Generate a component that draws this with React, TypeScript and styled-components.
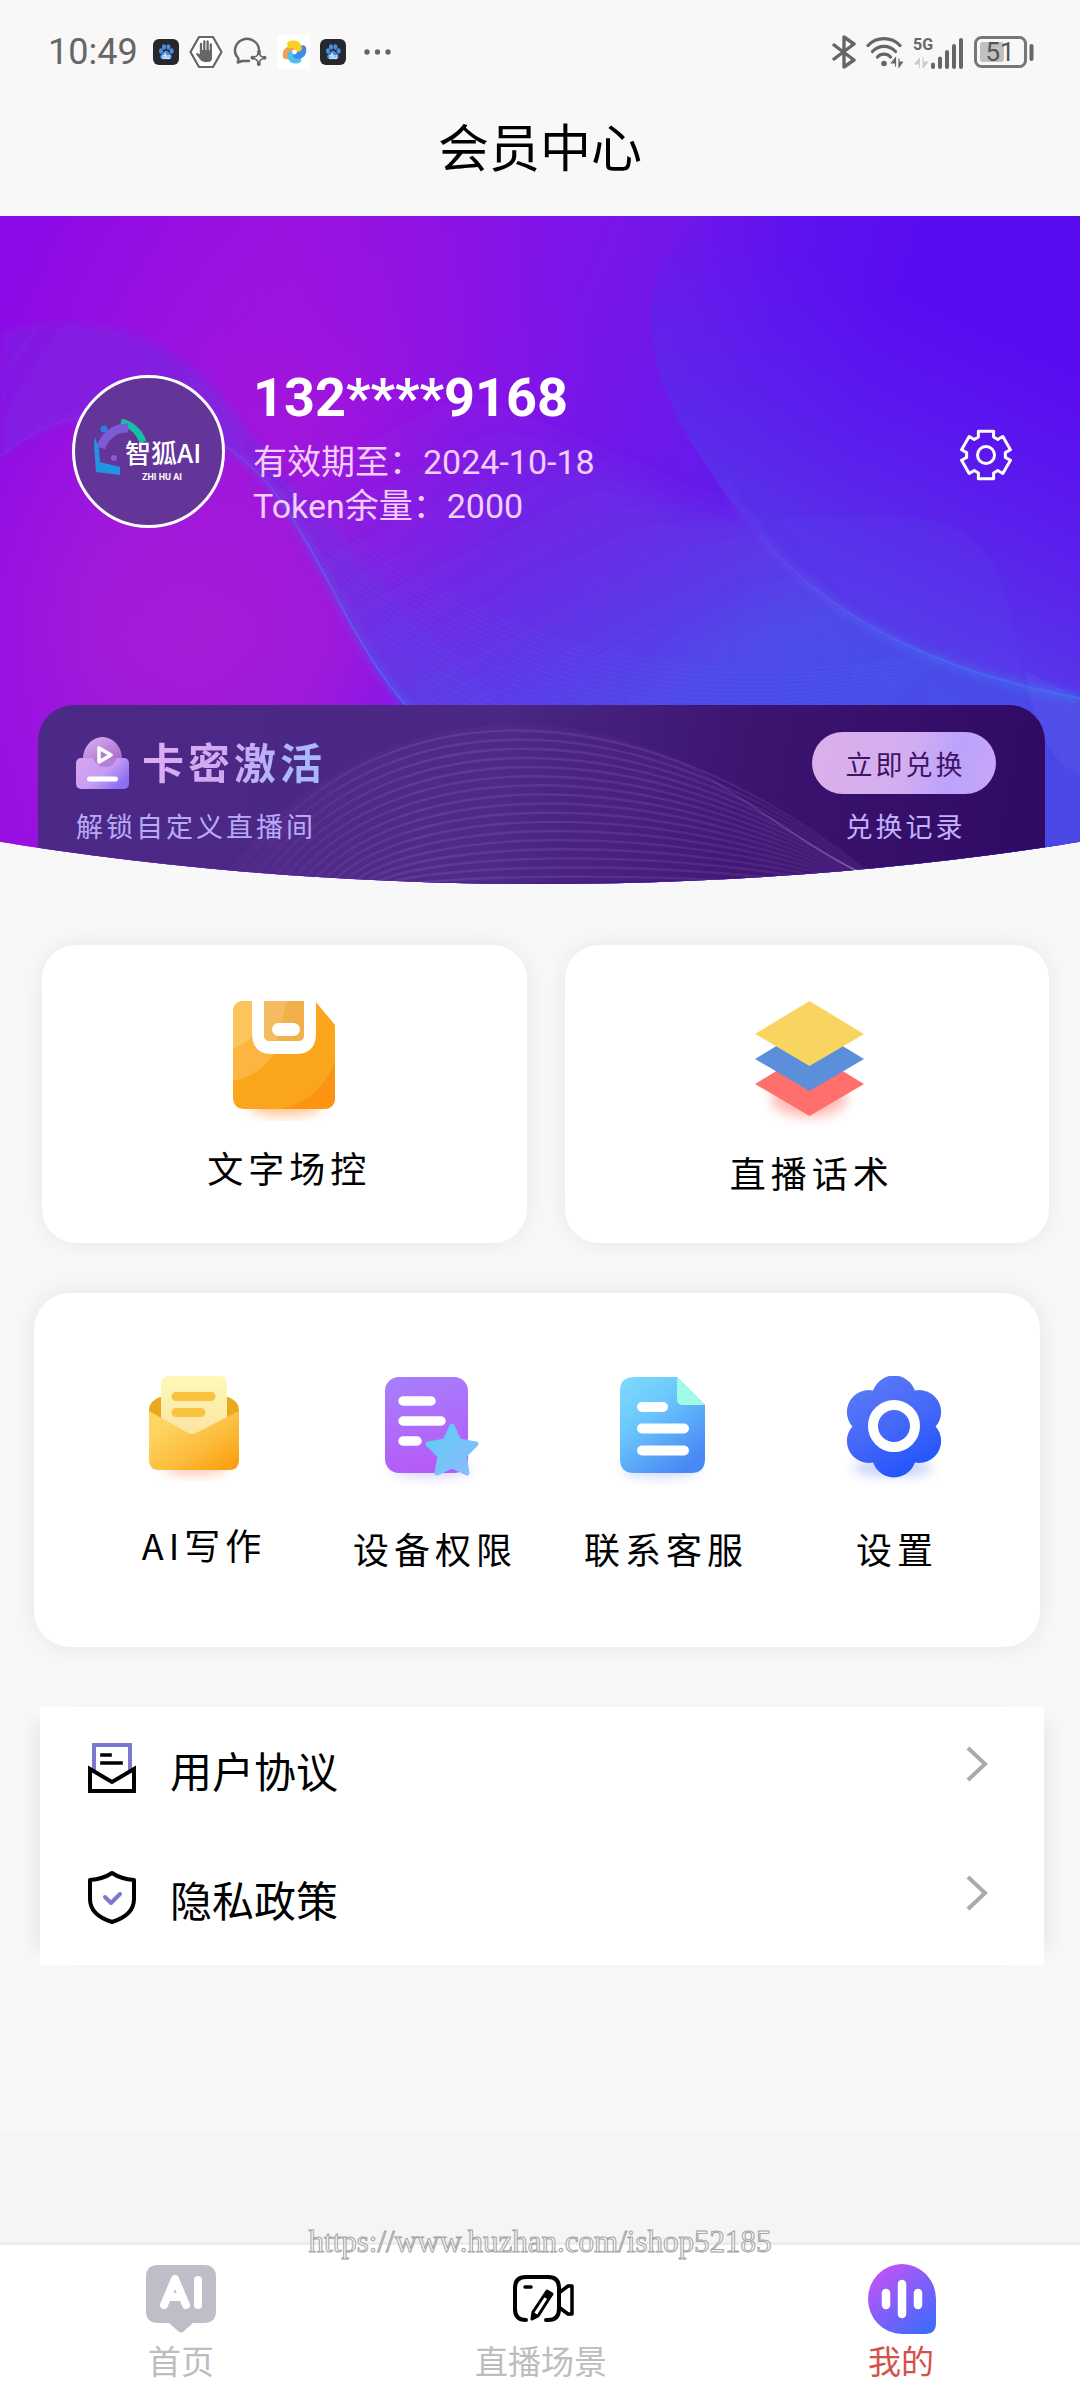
import React from "react";
import styled, { createGlobalStyle } from "styled-components";

const cjk = `"Noto Sans CJK SC", "Noto Sans", sans-serif`;
const latin = `Roboto, "Noto Sans CJK SC", sans-serif`;

const GlobalStyle = createGlobalStyle`
  *, *::before, *::after { box-sizing: border-box; }
  body { margin: 0; background: #f8f8f8; font-family: ${cjk}; color: #000; }
  h1, h2, p { margin: 0; font-weight: 400; }
  a { color: inherit; text-decoration: none; }
  button { border: 0; padding: 0; background: none; font: inherit; color: inherit; cursor: pointer; }
  svg { display: block; flex: none; }
`;

const Page = styled.div`
  display: flex;
  flex-direction: column;
  min-height: 100vh;
`;

/* ---------- status bar and title ---------- */

const StatusBar = styled.div`
  display: flex;
  align-items: center;
  justify-content: space-between;
  height: 104px;
  padding: 0 46px 0 48px;
  color: #666;
`;

const StatusGroup = styled.div`
  display: flex;
  align-items: center;
  gap: 10px;
`;

const Clock = styled.time`
  margin-right: 5px;
  font: 400 36px/40px ${latin};
`;

const Title = styled.h1`
  padding-bottom: 30px;
  font-size: 51px;
  line-height: 82px;
  text-align: center;
`;

/* ---------- hero ---------- */

const Hero = styled.section`
  position: relative;
  padding: 159px 35px 0 38px;
  clip-path: ellipse(143% 100% at 50% 0);
  background: #7a1ce6;
`;

const HeroArt = styled.svg`
  position: absolute;
  inset: 0;
  width: 100%;
  height: 100%;
`;

const Profile = styled.div`
  position: relative;
  display: flex;
  align-items: center;
  padding: 0 33px 0 34px;
`;

const Avatar = styled.div`
  width: 153px;
  height: 153px;
  border: 3px solid #fff;
  border-radius: 50%;
  background: #633598;
  overflow: hidden;
`;

const ProfileText = styled.div`
  flex: 1;
  padding-left: 28px;
  color: #f3cdfb;
  font: 400 34px/44px ${latin};
`;

const Phone = styled.h2`
  margin-bottom: 20px;
  color: #fff;
  font: 700 54px/45px ${latin};
`;

const SettingsButton = styled.button`
  padding-top: 6px;
`;

const VipCard = styled.div`
  position: relative;
  display: flex;
  justify-content: space-between;
  height: 179px;
  margin-top: 177px;
  padding: 27px 49px 0 38px;
  border-radius: 36px 36px 0 0;
  background: linear-gradient(100deg, #4c2986 0%, #4a2784 45%, #3b1470 70%, #2f0a63 100%);
  overflow: hidden;
`;

const VipColumn = styled.div<{ $align: string }>`
  position: relative;
  display: flex;
  flex-direction: column;
  align-items: ${(p) => p.$align};
  gap: 12px;
`;

const VipTitle = styled.div`
  display: flex;
  align-items: center;
  gap: 13px;
  height: 62px;
`;

const VipName = styled.h2`
  padding-bottom: 4px;
  font-size: 42px;
  font-weight: 700;
  line-height: 58px;
  letter-spacing: 4px;
  background: linear-gradient(110deg, #e0aef0 0%, #cfa8f2 45%, #a9b8fb 80%);
  background-clip: text;
  -webkit-background-clip: text;
  color: transparent;
`;

const VipNote = styled.p`
  color: #b9aaf8;
  font-size: 27px;
  line-height: 40px;
  letter-spacing: 3px;
`;

const RedeemButton = styled.button`
  width: 184px;
  height: 62px;
  padding-left: 3px;
  border-radius: 31px;
  background: linear-gradient(105deg, #dcb0ea 0%, #d3aef0 50%, #bda2fc 75%, #c6a8f8 100%);
  color: #3d1466;
  font-size: 27px;
  letter-spacing: 3px;
`;

const RecordLink = styled.a`
  padding-left: 3px;
  color: #c0b2fb;
  font-size: 27px;
  line-height: 40px;
  letter-spacing: 3px;
`;

/* ---------- feature cards ---------- */

const FeatureRow = styled.div`
  display: grid;
  grid-template-columns: 1fr 1fr;
  gap: 38px;
  padding: 61px 31px 0 42px;
`;

const Tile = styled.button<{ $gap: number }>`
  display: flex;
  flex-direction: column;
  align-items: center;
  justify-content: flex-start;
  gap: ${(p) => p.$gap}px;
`;

const TileLabel = styled.span`
  padding-left: 5px;
  font-size: 36px;
  line-height: 46px;
  letter-spacing: 5px;
`;

const FeatureCard = styled(Tile)`
  padding: 56px 0 48px 5px;
  border-radius: 34px;
  background: #fff;
  box-shadow: 0 0 24px rgba(0, 0, 0, 0.07);
`;

const ToolCard = styled.div`
  display: grid;
  grid-template-columns: repeat(4, 1fr);
  align-items: start;
  margin: 50px 40px 0 34px;
  padding: 83px 30px 76px 52px;
  border-radius: 36px;
  background: #fff;
  box-shadow: 0 0 28px rgba(0, 0, 0, 0.08);
`;

const List = styled.nav`
  margin: 60px 36px 0 40px;
  background: #fff;
  box-shadow: 18px 0 20px -14px rgba(0, 0, 0, 0.08), -18px 0 20px -14px rgba(0, 0, 0, 0.08);
`;

const ListRow = styled.a`
  display: flex;
  align-items: center;
  gap: 32px;
  height: 129px;
  padding: 0 56px 8px 46px;

  svg:last-child { margin-bottom: 8px; }
`;

const ListLabel = styled.span`
  flex: 1;
  padding-top: 4px;
  font-size: 42px;
  line-height: 60px;
`;

/* ---------- bottom tabs ---------- */

const Footer = styled.footer`
  position: relative;
  margin-top: auto;
  padding-top: 111px;
  background: #f5f5f5;
`;

const Tabs = styled.nav`
  display: grid;
  grid-template-columns: repeat(3, 1fr);
  height: 158px;
  border-top: 3px solid #ededed;
  background: #fff;
`;

const Tab = styled.a<{ $color: string }>`
  display: flex;
  flex-direction: column;
  align-items: center;
  padding: 18px 0 0 2px;
  gap: 3px;
  color: ${(p) => p.$color};
  font-size: 33px;
  line-height: 44px;
`;

const Watermark = styled.div`
  position: absolute;
  top: 93px;
  left: 0;
  right: 0;
  text-align: center;
  font: 400 31px/36px "Liberation Serif", serif;
  color: #f8f8f8;
  -webkit-text-stroke: 1px #a4a4a4;
  pointer-events: none;
`;

/* ---------- status icons ---------- */

const PawIcon = () => (
  <svg width="26" height="26" viewBox="0 0 26 26">
    <rect width="26" height="26" rx="6" fill="#26282d" />
    <g fill="#4a8ee0">
      <ellipse cx="8" cy="12" rx="2" ry="2.800" />
      <ellipse cx="11" cy="8" rx="2" ry="2.800" />
      <ellipse cx="15.400" cy="8" rx="2" ry="2.800" />
      <ellipse cx="18.600" cy="12" rx="2" ry="2.800" />
      <path d="M13 11.500c2 0 3 2.600 4.600 3.800 2 1.500 1.400 5-1.400 5H9.800c-2.800 0-3.400-3.500-1.400-5C10 14.100 11 11.500 13 11.500Z" />
    </g>
    <text x="13" y="19.500" fontSize="7" fontWeight="700" fontFamily="Roboto, sans-serif" textAnchor="middle" fill="#fff">du</text>
  </svg>
);

const HandIcon = () => (
  <svg width="34" height="34" viewBox="0 0 34 34">
    <path d="M10 2h14l8.500 15L24 32H10L1.500 17Z" fill="#fff" stroke="#666" strokeWidth="2.200" strokeLinejoin="round" />
    <path d="M12 20V9M15.300 17V6.500M18.600 17V6.500M21.800 18V9.500" stroke="#666" strokeWidth="2.300" strokeLinecap="round" />
    <path d="M10.900 15h12.100v8q0 4-4 4h-3.600q-3 0-4.600-3l-3.600-4.400q-.8-1.800 1.200-1.600l2.500 1.400Z" fill="#666" />
  </svg>
);

const BubbleIcon = () => (
  <svg width="34" height="30" viewBox="0 0 34 30" fill="none" stroke="#666" strokeWidth="2.400" strokeLinejoin="round">
    <path d="M26 13A12 11.500 0 1 0 5.500 21.500L4.800 25.500 9 24H16" strokeLinecap="round" />
    <path d="M26 15.500l1.600 3.400 3.600 2-3.600 2-2 3.600-1.800-3.600-4.200-2 4.200-2Z" strokeWidth="1.600" />
    <g fill="#666" stroke="none">
      <circle cx="26" cy="15" r="2" /><circle cx="31.500" cy="20.800" r="2" /><circle cx="25.800" cy="27" r="2" /><circle cx="19.500" cy="20.800" r="2" />
    </g>
  </svg>
);

const PinwheelIcon = () => (
  <svg width="33" height="34" viewBox="0 0 33 34">
    <rect width="33" height="34" fill="#fff" />
    <g strokeWidth="7.500" strokeLinecap="round" fill="none">
      <path d="M9.500 20.500Q9 15 15 14.500" stroke="#f6a04d" />
      <path d="M20.500 24.500Q14.500 26 14 20" stroke="#4fbef3" />
      <path d="M25.500 14Q26 20.500 20 20" stroke="#3f8ae6" />
      <path d="M14 9.500Q20 8 21 13" stroke="#fbcf1f" />
    </g>
    <circle cx="17.500" cy="17" r="2.400" fill="#fff" />
  </svg>
);

const DotsIcon = () => (
  <svg width="35" height="6" viewBox="-8 0 35 6" fill="#666">
    <circle cx="3" cy="3" r="2.700" /><circle cx="13.500" cy="3" r="2.700" /><circle cx="24" cy="3" r="2.700" />
  </svg>
);

const BluetoothIcon = () => (
  <svg width="24" height="34" viewBox="0 0 24 34" fill="none" stroke="#666" strokeWidth="3.400" strokeLinejoin="round" strokeLinecap="round">
    <path d="M2 10l20 15-10 7V2l10 7L2 24" />
  </svg>
);

const WifiIcon = () => (
  <svg width="37" height="32" viewBox="0 0 37 32" fill="none" stroke="#666" strokeWidth="3.200" strokeLinecap="round">
    <path d="M2 9.500a22 22 0 0 1 32 0M6.500 15.500a15.500 15.500 0 0 1 23 0M11.500 21a9 9 0 0 1 13 0" />
    <circle cx="18" cy="27.500" r="2.800" fill="#666" stroke="none" />
    <path d="M29.500 30v-8l-4 5h4M33 23v8l3.500-5H33" fill="#666" strokeWidth="1.200" />
  </svg>
);

const SignalIcon = () => (
  <svg width="51" height="34" viewBox="0 -2 51 34">
    <text x="0" y="13" fontSize="16" fontWeight="700" fontFamily="Roboto, sans-serif" fill="#666">5G</text>
    <path d="M6.500 31V21l-5 6h5M10 20v11l5-6h-5" fill="#ccc" stroke="#ccc" />
    <g stroke="#666" strokeWidth="4" strokeLinecap="round">
      <path d="M20 27.500v2.500M27 21.500V30M34 15v15M41 9v21M48 3v27" />
    </g>
  </svg>
);

const BatteryIcon = () => (
  <svg width="60" height="32" viewBox="0 0 60 32">
    <rect x="1.500" y="1.500" width="50" height="29" rx="6" fill="none" stroke="#777" strokeWidth="3" />
    <rect x="6" y="6" width="24" height="20" rx="3" fill="#c0c0c0" />
    <rect x="55.500" y="8" width="4" height="17" rx="2" fill="#666" />
    <text x="26" y="25" fontSize="26" fontFamily="Roboto, sans-serif" textAnchor="middle" fill="#555">51</text>
  </svg>
);

/* ---------- hero drawings ---------- */

const heroLines = Array.from({ length: 30 }, (_, i) => i);

const HeroBackground = () => (
  <HeroArt viewBox="0 0 1080 668" preserveAspectRatio="none" aria-hidden="true">
    <defs>
      <linearGradient id="base" x1="0" y1="0" x2="1" y2="0.250">
        <stop offset="0" stopColor="#8a09e8" />
        <stop offset="0.250" stopColor="#9911df" />
        <stop offset="0.500" stopColor="#7d14e9" />
        <stop offset="0.750" stopColor="#621bec" />
        <stop offset="1" stopColor="#5a14ee" />
      </linearGradient>
      <radialGradient id="magenta" gradientUnits="userSpaceOnUse" cx="210" cy="400" r="300">
        <stop offset="0" stopColor="#a81cd6" />
        <stop offset="0.400" stopColor="#a41cd8" stopOpacity="0.800" />
        <stop offset="1" stopColor="#9a14e0" stopOpacity="0" />
      </radialGradient>
      <radialGradient id="magentaTop" gradientUnits="userSpaceOnUse" cx="300" cy="190" r="300">
        <stop offset="0" stopColor="#a616da" stopOpacity="0.700" />
        <stop offset="1" stopColor="#9a14e0" stopOpacity="0" />
      </radialGradient>
      <linearGradient id="leftWave" gradientUnits="userSpaceOnUse" x1="0" y1="100" x2="560" y2="480">
        <stop offset="0" stopColor="#7a26e0" stopOpacity="0.450" />
        <stop offset="0.300" stopColor="#7428e0" stopOpacity="0.650" />
        <stop offset="0.600" stopColor="#7a2ae0" stopOpacity="0.600" />
        <stop offset="1" stopColor="#5a4cea" stopOpacity="0.800" />
      </linearGradient>
      <linearGradient id="middle" gradientUnits="userSpaceOnUse" x1="440" y1="160" x2="640" y2="560">
        <stop offset="0" stopColor="#7a22e4" stopOpacity="0" />
        <stop offset="0.400" stopColor="#6a2ee4" stopOpacity="0.700" />
        <stop offset="0.850" stopColor="#5246e8" />
        <stop offset="1" stopColor="#4c46e8" />
      </linearGradient>
      <linearGradient id="rightWave" gradientUnits="userSpaceOnUse" x1="640" y1="140" x2="860" y2="200">
        <stop offset="0" stopColor="#6a10ec" stopOpacity="0.300" />
        <stop offset="0.500" stopColor="#5c10ee" stopOpacity="0.800" />
        <stop offset="1" stopColor="#5a0cf0" />
      </linearGradient>
      <linearGradient id="rightLow" gradientUnits="userSpaceOnUse" x1="980" y1="120" x2="840" y2="420">
        <stop offset="0" stopColor="#5c24ec" stopOpacity="0" />
        <stop offset="0.600" stopColor="#5a2cea" stopOpacity="0.800" />
        <stop offset="1" stopColor="#5540e8" />
      </linearGradient>
      <linearGradient id="lowerGlow" gradientUnits="userSpaceOnUse" x1="620" y1="0" x2="1080" y2="0">
        <stop offset="0" stopColor="#4a54ee" stopOpacity="0" />
        <stop offset="0.600" stopColor="#4850e8" stopOpacity="0.600" />
        <stop offset="1" stopColor="#4a48e6" stopOpacity="0.800" />
      </linearGradient>
      <linearGradient id="edge" x1="0" y1="0" x2="1" y2="1">
        <stop offset="0" stopColor="#7a50f0" stopOpacity="0.200" />
        <stop offset="0.600" stopColor="#4f6cf0" stopOpacity="0.800" />
        <stop offset="1" stopColor="#3f78f0" />
      </linearGradient>
      <filter id="soft"><feGaussianBlur stdDeviation="4" /></filter>
      <filter id="softer"><feGaussianBlur stdDeviation="16" /></filter>
      <clipPath id="rightArea"><path d="M700 0C630 60 640 150 700 240 780 370 900 450 1080 482V0Z" /></clipPath>
      <clipPath id="middleArea"><path d="M225 210Q250 240 270 270C330 350 350 430 415 500V668H1080V0H400Z" /></clipPath>
    </defs>
    <rect width="1080" height="668" fill="url(#base)" />
    <rect width="1080" height="668" fill="url(#magenta)" />
    <rect width="1080" height="668" fill="url(#magentaTop)" />
    <path d="M0 240Q50 200 110 196 210 200 270 270C330 350 365 440 415 492L470 560H560C480 460 330 330 230 190 160 100 60 95 0 118Z" fill="url(#leftWave)" filter="url(#soft)" />
    <g clipPath="url(#middleArea)">
      <path d="M260 280C320 360 350 460 405 520V700H1120V300H700L450 170Z" fill="url(#middle)" filter="url(#softer)" />
    </g>
    <path d="M560 520Q760 360 800 385 900 460 1120 482V700H560Z" fill="url(#lowerGlow)" filter="url(#softer)" />
    <g clipPath="url(#rightArea)">
      <rect x="620" width="460" height="490" fill="url(#rightWave)" />
      <rect x="620" width="460" height="490" fill="url(#rightLow)" />
    </g>
    <path d="M780 302C900 300 960 290 995 350 1030 430 1010 520 1080 550V482C960 460 860 410 780 302Z" fill="#5a50ee" opacity="0.140" />
    <path d="M1025 455C1035 510 1045 540 1080 560V482Z" fill="#6a6cf0" opacity="0.180" />
    <g fill="none" strokeWidth="1" stroke="#4f86f4" opacity="0.150">
      {heroLines.map((i) => (
        <path key={i} d={`M${260 + i * 6} ${250 + i * 10}C${420 + i * 4} ${380 + i * 9} ${600 + i * 4} ${500 + i * 3} ${960 - i * 6} ${435 + i * 4}`} />
      ))}
    </g>
    <g fill="none" stroke="url(#edge)">
      <path d="M0 240Q50 200 110 196 210 200 270 270C330 350 350 430 415 500" strokeWidth="6" opacity="0.500" filter="url(#soft)" />
      <path d="M0 240Q50 200 110 196 210 200 270 270C330 350 350 430 415 500" strokeWidth="1.600" opacity="0.800" />
      <path d="M720 260C790 380 900 450 1080 482" strokeWidth="8" opacity="0.600" filter="url(#soft)" />
      <path d="M760 320C830 400 930 454 1080 482" strokeWidth="2" opacity="0.700" />
    </g>
  </HeroArt>
);

const vipLines = Array.from({ length: 24 }, (_, i) => i);

const VipBackground = () => (
  <HeroArt viewBox="0 0 1007 179" preserveAspectRatio="none" aria-hidden="true">
    <defs>
      <linearGradient id="fan" gradientUnits="userSpaceOnUse" x1="180" y1="0" x2="840" y2="0">
        <stop offset="0" stopColor="#a070d0" stopOpacity="0" />
        <stop offset="0.300" stopColor="#a070d0" stopOpacity="0.220" />
        <stop offset="0.700" stopColor="#a070d0" stopOpacity="0.180" />
        <stop offset="1" stopColor="#b080d8" stopOpacity="0.050" />
      </linearGradient>
      <linearGradient id="fanEdge" gradientUnits="userSpaceOnUse" x1="640" y1="60" x2="840" y2="170">
        <stop offset="0" stopColor="#8a5cb8" stopOpacity="0" />
        <stop offset="1" stopColor="#9a70c0" stopOpacity="0.800" />
      </linearGradient>
    </defs>
    <path d="M180 179C320 -20 560 -10 690 85 740 120 780 145 835 175Z" fill="#8048b0" opacity="0.100" />
    <g fill="none" stroke="url(#fan)" strokeWidth="2.400">
      {vipLines.map((i) => (
        <path key={i} d={`M${190 + i * 10} 182C${320 + i * 4} ${-20 + i * 12} ${590 + i * 3} ${-30 + i * 12} 838 ${173 + i}`} />
      ))}
      <path d="M80 160Q140 145 210 172M100 166Q140 152 190 172" />
    </g>
    <path d="M640 55C720 100 770 145 840 176" fill="none" stroke="url(#fanEdge)" strokeWidth="2" />
  </HeroArt>
);

const Logo = () => (
  <svg width="147" height="147" viewBox="3 3 147 147" role="img" aria-label="智狐AI">
    <path d="M49 47a31 31 0 0 1 22 20" fill="none" stroke="#17bfa4" strokeWidth="7" />
    <path d="M29 73a27 27 0 0 1 27-20" fill="none" stroke="#7b5bd6" strokeWidth="9" />
    <circle cx="32" cy="54" r="3.500" fill="#2f80d8" />
    <path d="M23 62l4 12 1 13 20 5v8l-24-3-2-28Z" fill="#2194e2" />
    <circle cx="42" cy="83" r="3" fill="#8a5bd8" />
    <g fill="#fff">
      <text x="53" y="88" fontSize="26" fontWeight="500" fontFamily='"Noto Sans CJK SC", sans-serif'>智狐AI</text>
      <text x="70" y="105" fontSize="9" fontWeight="700" fontFamily="Roboto, sans-serif">ZHI HU AI</text>
    </g>
  </svg>
);

/* Outline of a cog whose teeth start at the top and repeat around the centre. */
function cogPath(teeth: number, outer: number, inner: number, tip: number, root: number) {
  const points: string[] = [];
  const put = (radius: number, angle: number) =>
    points.push(`${(26 + radius * Math.sin(angle)).toFixed(2)} ${(26 - radius * Math.cos(angle)).toFixed(2)}`);
  for (let i = 0; i < teeth; i += 1) {
    const a = (i * 2 * Math.PI) / teeth;
    put(inner, a - root);
    put(outer, a - tip);
    put(outer, a + tip);
    put(inner, a + root);
  }
  return `M${points.join("L")}Z`;
}

const CogIcon = () => (
  <svg width="52" height="52" viewBox="0 0 52 52" fill="none" stroke="#fff" strokeWidth="3" strokeLinejoin="round">
    <path d={cogPath(6, 25, 19.5, 0.31, 0.4)} />
    <circle cx="26" cy="26" r="8.500" />
  </svg>
);

const VipIcon = () => (
  <svg width="53" height="52" viewBox="0 0 53 52">
    <defs>
      <linearGradient id="box" x1="0" y1="0" x2="1" y2="0.600">
        <stop offset="0" stopColor="#dba6f0" />
        <stop offset="0.600" stopColor="#c79cf4" />
        <stop offset="1" stopColor="#8a70f4" />
      </linearGradient>
      <linearGradient id="dome" x1="0" y1="0" x2="1" y2="1">
        <stop offset="0" stopColor="#dcb4f4" />
        <stop offset="1" stopColor="#a868c8" />
      </linearGradient>
    </defs>
    <path d="M7 22a19.500 22 0 0 1 39 0Z" fill="url(#dome)" />
    <rect y="21" width="53" height="31" rx="5" fill="url(#box)" />
    <path d="M17 21h24q-3 9-12 9t-12-9Z" fill="#a66cc4" opacity="0.600" />
    <path d="M23 11v14l12-7Z" fill="#b07fd2" stroke="#fff" strokeWidth="3.600" strokeLinejoin="round" />
    <path d="M13.500 42h26" stroke="#fff" strokeWidth="5" strokeLinecap="round" />
  </svg>
);

/* ---------- feature icons ---------- */

const DiskIcon = () => (
  <svg width="130" height="120" viewBox="-13 0 130 120">
    <defs>
      <filter id="glow" x="-30%" y="-60%" width="160%" height="220%"><feGaussianBlur stdDeviation="6" /></filter>
      <clipPath id="disk"><path d="M12 0H82L102 24V96q0 12-12 12H12Q0 108 0 96V12Q0 0 12 0Z" /></clipPath>
    </defs>
    <ellipse cx="50" cy="106" rx="36" ry="9" fill="#ff9a3c" opacity="0.550" filter="url(#glow)" />
    <g clipPath="url(#disk)" transform="translate(-2 0)">
      <rect width="102" height="108" fill="#fba51c" />
      <path d="M0 0H60Q50 70 0 80Z" fill="#fbb540" />
      <path d="M0 0H40Q30 35 0 48Z" fill="#fcc45c" />
      <path d="M102 60Q90 96 50 108H102Z" fill="#fd9313" />
      <path d="M19 0H83V32q0 21-20 21H39Q19 53 19 32Z" fill="#fff" />
      <path d="M31 0H71V34q0 6-6 6H37q-6 0-6-6Z" fill="#f2b04a" />
      <path d="M31 0H54L44 40H37q-6 0-6-6Z" fill="#f5bb60" />
      <rect x="39" y="22" width="28" height="13" rx="6.500" fill="#fff" />
    </g>
  </svg>
);

const LayersIcon = () => (
  <svg width="130" height="125" viewBox="-11 0 130 125">
    <ellipse cx="54" cy="98" rx="38" ry="18" fill="#ff6a5a" opacity="0.450" filter="url(#glow)" />
    <path d="M54.500 50L109 83 54.500 115 0 83Z" fill="#ff6f6b" />
    <path d="M54.500 25L109 58 54.500 90 0 58Z" fill="#5c8fdb" />
    <path d="M54.500 0L109 33 54.500 65 0 33Z" fill="#f8d560" />
  </svg>
);

const EnvelopeIcon = () => (
  <svg width="110" height="105" viewBox="-1 0 110 105">
    <defs>
      <linearGradient id="env" x1="0" y1="0" x2="1" y2="1">
        <stop offset="0.200" stopColor="#fdd560" />
        <stop offset="0.600" stopColor="#fcbc3c" />
        <stop offset="1" stopColor="#fb9a08" />
      </linearGradient>
      <linearGradient id="paper" x1="0" y1="0" x2="0" y2="1">
        <stop offset="0" stopColor="#fdf9b8" />
        <stop offset="1" stopColor="#fbe2a0" />
      </linearGradient>
    </defs>
    <ellipse cx="47" cy="92" rx="32" ry="7" fill="#ff8a50" opacity="0.450" filter="url(#glow)" />
    <path d="M1 34q0-9 11-13h68q11 4 11 13v20H1Z" fill="#eaa81c" />
    <rect x="13" y="0" width="66" height="62" rx="7" fill="url(#paper)" />
    <path d="M28 20.500H63M28 36.500H53" stroke="#f9c33f" strokeWidth="9" strokeLinecap="round" />
    <path d="M1 35L40 57q4 2 8 0L91 35V84q0 10-10 10H11q-10 0-10-10Z" fill="url(#env)" />
  </svg>
);

const StarDocIcon = () => (
  <svg width="110" height="109" viewBox="-7 0 110 109">
    <defs>
      <linearGradient id="sdoc" x1="0" y1="0" x2="0.200" y2="1">
        <stop offset="0" stopColor="#a680fc" />
        <stop offset="1" stopColor="#b55cf8" />
      </linearGradient>
      <linearGradient id="star" x1="0" y1="0" x2="1" y2="1">
        <stop offset="0" stopColor="#5cccf4" />
        <stop offset="1" stopColor="#8cbcfc" />
      </linearGradient>
    </defs>
    <ellipse cx="46" cy="94" rx="40" ry="7" fill="#8f7cf8" opacity="0.350" filter="url(#glow)" />
    <rect x="0" y="1" width="83" height="96" rx="14" fill="url(#sdoc)" />
    <path d="M18 25H46M18 45H56M18 65H32" stroke="#fff" strokeWidth="9.500" strokeLinecap="round" />
    <path d="M67 50l7 15 17 3-12 12 3 17-15-7-15 7 3-17-12-12 17-3Z" fill="url(#star)" stroke="url(#star)" strokeWidth="5" strokeLinejoin="round" />
  </svg>
);

const DocIcon = () => (
  <svg width="110" height="109" viewBox="-11 0 110 109">
    <defs>
      <linearGradient id="ddoc" x1="0" y1="0" x2="0.700" y2="1">
        <stop offset="0" stopColor="#7cdcfc" />
        <stop offset="0.400" stopColor="#6cc8fc" />
        <stop offset="1" stopColor="#4888f4" />
      </linearGradient>
    </defs>
    <ellipse cx="40" cy="94" rx="38" ry="7" fill="#6c8cf8" opacity="0.350" filter="url(#glow)" />
    <path d="M14 1H57L85 29V83q0 14-14 14H14Q0 97 0 83V15Q0 1 14 1Z" fill="url(#ddoc)" />
    <path d="M57 1L85 29H63q-6 0-6-6Z" fill="#a0fae8" />
    <path d="M22 31H43M22 52.500H64M22 74.500H64" stroke="#fff" strokeWidth="10" strokeLinecap="round" />
  </svg>
);

const FlowerIcon = () => (
  <svg width="110" height="109" viewBox="-7 0 110 109">
    <defs>
      <linearGradient id="flower" gradientUnits="userSpaceOnUse" x1="20" y1="0" x2="70" y2="100">
        <stop offset="0" stopColor="#5c7af6" />
        <stop offset="0.500" stopColor="#4468f8" />
        <stop offset="1" stopColor="#2052fc" />
      </linearGradient>
    </defs>
    <ellipse cx="46" cy="92" rx="40" ry="8" fill="#5a70f8" opacity="0.350" filter="url(#glow)" />
    <g fill="url(#flower)">
      <circle cx="47" cy="50" r="40" />
      {[0, 60, 120, 180, 240, 300].map((deg) => (
        <circle
          key={deg}
          cx={47 + 29 * Math.sin((deg * Math.PI) / 180)}
          cy={50.5 - 29 * Math.cos((deg * Math.PI) / 180)}
          r="22"
        />
      ))}
    </g>
    <circle cx="47" cy="50" r="21" fill="none" stroke="#fff" strokeWidth="10" />
  </svg>
);

/* ---------- list icons ---------- */

const AgreementIcon = () => (
  <svg width="52" height="54" viewBox="0 0 52 54" fill="none" strokeWidth="4">
    <path d="M8 31V4H44V31" stroke="#7a78cf" />
    <path d="M16 14H24M16 22H35" stroke="#000" strokeLinecap="square" strokeWidth="3.600" />
    <path d="M4 50V28L26 41 48 28V50Z" stroke="#000" strokeLinejoin="miter" />
  </svg>
);

const ShieldIcon = () => (
  <svg width="52" height="54" viewBox="0 0 52 54" fill="none" strokeWidth="4" strokeLinecap="round" strokeLinejoin="round">
    <path d="M26 3q9 6 22 7V29q0 16-22 23Q4 45 4 29V10q13-1 22-7Z" stroke="#000" />
    <path d="M19 27l6 6 9-9" stroke="#7a78cf" />
  </svg>
);

const Chevron = () => (
  <svg width="22" height="36" viewBox="0 0 22 36" fill="none" stroke="#aaa" strokeWidth="4">
    <path d="M2 2L19 18 2 34" />
  </svg>
);

/* ---------- tab icons ---------- */

const HomeTabIcon = () => (
  <svg width="72" height="72" viewBox="0 0 72 72">
    <path d="M13 2H59q12 0 12 12V48q0 12-12 12H48L39 68q-3 3-6 0L24 60H13Q1 60 1 48V14Q1 2 13 2Z" fill="#c0bdc9" />
    <g fill="none" stroke="#fff" strokeWidth="8" strokeLinecap="round" strokeLinejoin="round">
      <path d="M19 42L30 16 41 42M24 34H36M53 17V42" />
    </g>
  </svg>
);

const SceneTabIcon = () => (
  <svg width="72" height="72" viewBox="0 0 72 72" fill="none" stroke="#000" strokeWidth="4" strokeLinecap="round" strokeLinejoin="round">
    <path d="M21 57q-11 0-11-11V25q0-11 11-11H43q11 0 11 11V46q0 11-11 11H41" />
    <path d="M55 29l8-6h4V51h-4l-8-6M20 24h6" strokeWidth="3.500" />
    <path d="M42 28l5 3L33 53l-6 3 1-7Z" strokeWidth="3" />
    <path d="M42 28l5 3-3 5-5-3ZM28 50l5 3-6 3Z" fill="#000" strokeWidth="2" />
  </svg>
);

const MineTabIcon = () => (
  <svg width="72" height="72" viewBox="-1 0 72 72">
    <defs>
      <linearGradient id="mine" x1="0.100" y1="0" x2="0.900" y2="1">
        <stop offset="0.100" stopColor="#bc55f6" />
        <stop offset="0.550" stopColor="#7a60fa" />
        <stop offset="1" stopColor="#3a6cfc" />
      </linearGradient>
    </defs>
    <path d="M36 1A34 35 0 0 1 70 36V60q0 11-11 11H36A34 35 0 0 1 36 1Z" fill="url(#mine)" />
    <path d="M20 30V42M36 21V51M52 30V42" stroke="#fff" strokeWidth="8.500" strokeLinecap="round" />
  </svg>
);

export default function App() {
  return (
    <Page>
      <GlobalStyle />
      <header>
        <StatusBar>
          <StatusGroup>
            <Clock>10:49</Clock>
            <PawIcon />
            <HandIcon />
            <BubbleIcon />
            <PinwheelIcon />
            <PawIcon />
            <DotsIcon />
          </StatusGroup>
          <StatusGroup>
            <BluetoothIcon />
            <WifiIcon />
            <SignalIcon />
            <BatteryIcon />
          </StatusGroup>
        </StatusBar>
        <Title>会员中心</Title>
      </header>

      <main>
        <Hero>
          <HeroBackground />
          <Profile>
            <Avatar><Logo /></Avatar>
            <ProfileText>
              <Phone>132****9168</Phone>
              <p>有效期至：2024-10-18</p>
              <p>Token余量：2000</p>
            </ProfileText>
            <SettingsButton type="button" aria-label="设置"><CogIcon /></SettingsButton>
          </Profile>
          <VipCard>
            <VipBackground />
            <VipColumn $align="flex-start">
              <VipTitle>
                <VipIcon />
                <VipName>卡密激活</VipName>
              </VipTitle>
              <VipNote>解锁自定义直播间</VipNote>
            </VipColumn>
            <VipColumn $align="center">
              <RedeemButton type="button">立即兑换</RedeemButton>
              <RecordLink href="#records">兑换记录</RecordLink>
            </VipColumn>
          </VipCard>
        </Hero>

        <FeatureRow>
          <FeatureCard type="button" $gap={23}><DiskIcon /><TileLabel>文字场控</TileLabel></FeatureCard>
          <FeatureCard type="button" $gap={23}><LayersIcon /><TileLabel>直播话术</TileLabel></FeatureCard>
        </FeatureRow>

        <ToolCard>
          <Tile type="button" $gap={40}><EnvelopeIcon /><TileLabel>AI写作</TileLabel></Tile>
          <Tile type="button" $gap={40}><StarDocIcon /><TileLabel>设备权限</TileLabel></Tile>
          <Tile type="button" $gap={40}><DocIcon /><TileLabel>联系客服</TileLabel></Tile>
          <Tile type="button" $gap={40}><FlowerIcon /><TileLabel>设置</TileLabel></Tile>
        </ToolCard>

        <List>
          <ListRow href="#agreement"><AgreementIcon /><ListLabel>用户协议</ListLabel><Chevron /></ListRow>
          <ListRow href="#privacy"><ShieldIcon /><ListLabel>隐私政策</ListLabel><Chevron /></ListRow>
        </List>
      </main>

      <Footer>
        <Tabs>
          <Tab href="#home" $color="#bdbdbd"><HomeTabIcon />首页</Tab>
          <Tab href="#scene" $color="#bdbdbd"><SceneTabIcon />直播场景</Tab>
          <Tab href="#mine" $color="#d2524a"><MineTabIcon />我的</Tab>
        </Tabs>
        <Watermark>https://www.huzhan.com/ishop52185</Watermark>
      </Footer>
    </Page>
  );
}
